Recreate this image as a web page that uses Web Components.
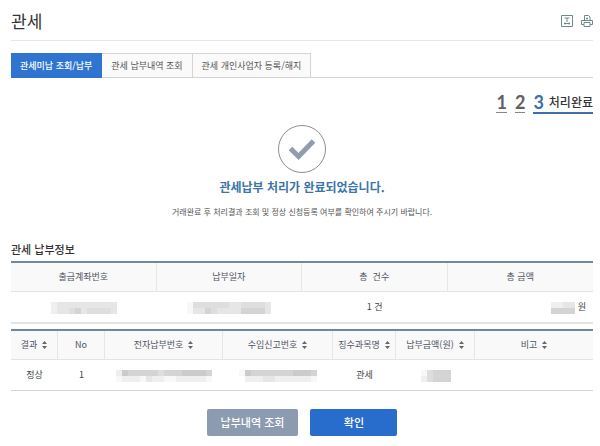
<!DOCTYPE html>
<html lang="ko">
<head>
<meta charset="utf-8">
<meta name="viewport" content="width=device-width, initial-scale=1">
<title>관세</title>
<style>
  body {
    margin: 0;
    padding: 0 7px 8px 11px;
    background: #fff;
    color: #444;
    font-family: "Noto Sans CJK KR", "Noto Sans", sans-serif;
    font-size: 9px;
  }
</style>
</head>
<body>
<page-header>관세</page-header>
<tab-bar>
  <tab-item active>관세미납 조회/납부</tab-item>
  <tab-item>관세 납부내역 조회</tab-item>
  <tab-item>관세 개인사업자 등록/해지</tab-item>
</tab-bar>
<step-list></step-list>
<result-message>
  <span slot="title">관세납부 처리가 완료되었습니다.</span>
  거래완료 후 처리결과 조회 및 정상 신청등록 여부를 확인하여 주시기 바랍니다.
</result-message>
<payment-summary>관세 납부정보</payment-summary>
<payment-list></payment-list>
<button-group>
  <action-button>납부내역 조회</action-button>
  <action-button primary>확인</action-button>
</button-group>

<script>
const tableStyle = `
  :host { display: block; }
  table {
    width: 100%;
    border-collapse: separate;
    border-spacing: 0;
    table-layout: fixed;
    border-top: 2px solid #70899a;
    font-size: 9px;
    line-height: 14px;
  }
  th {
    height: 28px;
    padding: 0;
    font-weight: 400;
    color: #505464;
    background: #f9f9f9;
    border-bottom: 1px solid #e3e3e3;
    border-right: 1px solid #e6e6e6;
    white-space: nowrap;
  }
  th:last-child { border-right: 0; }
  td {
    height: 30px;
    padding: 0;
    text-align: center;
    color: #3f3f3f;
    white-space: nowrap;
  }
`;

class PageHeader extends HTMLElement {
  constructor() {
    super();
    this.attachShadow({mode: 'open'}).innerHTML = `
    <style>
      :host {
        display: flex;
        justify-content: space-between;
        align-items: center;
        height: 41px;
        padding-top: 2px;
        box-sizing: border-box;
        border-bottom: 1px solid #e6e6e6;
      }
      h1 { margin: 0; font-size: 17px; line-height: 24px; font-weight: 400; color: #333; }
      .tools { display: flex; gap: 8px; }
      button { padding: 0; border: 0; background: none; height: 12px; cursor: pointer; }
      svg { display: block; }
    </style>
    <h1><slot></slot></h1>
    <div class="tools">
      <button type="button" aria-label="글자 크기">
        <svg width="12" height="12" viewBox="0 0 12 12" fill="none" stroke="#688c8c">
          <path d="M.5.5h11v11H.5z"/>
          <path d="M3.500 3h5M6 3v4M3 8.500h6M4 7.500v2M8 7.500v2"/>
        </svg>
      </button>
      <button type="button" aria-label="인쇄">
        <svg width="12" height="12" viewBox="0 0 12 12" fill="none" stroke="#688c8c">
          <path d="M3.500 5V.5h4l1.500 1.500v3M3 9.500H.5v-4h11v4H9M3 7.500h6v4H3zM5 3.500h2M6 2.500v2"/>
        </svg>
      </button>
    </div>`;
  }
}

class TabBar extends HTMLElement {
  constructor() {
    super();
    this.attachShadow({mode: 'open'}).innerHTML = `
    <style>
      :host { display: flex; margin-top: 12px; border-bottom: 1px solid #d4d4d4; }
    </style>
    <slot></slot>`;
  }
}

class TabItem extends HTMLElement {
  constructor() {
    super();
    this.attachShadow({mode: 'open'}).innerHTML = `
    <style>
      :host { display: block; margin-bottom: -1px; }
      a {
        display: block;
        padding: 0 9px;
        border: 1px solid #d4d4d4;
        border-left: 0;
        background: #fafafa;
        color: #555;
        font-size: 9px;
        line-height: 23px;
        text-decoration: none;
        white-space: nowrap;
      }
      :host([active]) a {
        background: #2f74d0;
        border-color: #2f74d0;
        color: #fff;
        font-weight: 500;
      }
    </style>
    <a href="#"><slot></slot></a>`;
  }
}

class StepList extends HTMLElement {
  constructor() {
    super();
    this.attachShadow({mode: 'open'}).innerHTML = `
    <style>
      :host { display: block; margin-top: 14px; }
      ol { display: flex; justify-content: flex-end; gap: 8px; margin: 0; padding: 0; list-style: none; }
      li {
        display: flex;
        align-items: center;
        gap: 5px;
        height: 20px;
        border-bottom: 1px solid #888;
        color: #606060;
        font-family: Lato, sans-serif;
        font-size: 18px;
        font-weight: 700;
        line-height: 20px;
      }
      .on { border-bottom: 2px solid #3d6fae; color: #3d6fae; }
      .on span { color: #333; font: 500 12px/20px "Noto Sans CJK KR", "Noto Sans", sans-serif; }
    </style>
    <ol>
      <li>1</li>
      <li>2</li>
      <li class="on">3<span>처리완료</span></li>
    </ol>`;
  }
}

class ResultMessage extends HTMLElement {
  constructor() {
    super();
    this.attachShadow({mode: 'open'}).innerHTML = `
    <style>
      :host {
        display: flex;
        flex-direction: column;
        align-items: center;
        margin-top: 11px;
        text-align: center;
      }
      h2 { margin: 5px 0 0; font-size: 12px; line-height: 18px; font-weight: 700; color: #3a74a8; }
      p { margin: 10px 0 0; font-size: 8px; line-height: 12px; color: #555; }
    </style>
    <svg width="48" height="48" viewBox="0 0 48 48" fill="none">
      <circle cx="24" cy="24" r="23.500" stroke="#8d8d8d"/>
      <path d="M12.500 23.500l8 8L35.500 16" stroke="#929cac" stroke-width="5"/>
    </svg>
    <h2><slot name="title"></slot></h2>
    <p><slot></slot></p>`;
  }
}

// masked value: each digit in the rows attribute is the grey level of one cell
class MaskedValue extends HTMLElement {
  connectedCallback() {
    const shades = ['#fff', '#f8f8f8', '#efefef', '#e6e6e6', '#dedede', '#d4d4d4', '#cbcbcb'];
    const rows = this.getAttribute('rows').split(' ');
    const size = 6;
    let cells = '';
    rows.forEach((row, y) => {
      [...row].forEach((level, x) => {
        cells += `<rect x="${x * size}" y="${y * size}" width="${size}" height="${size}" fill="${shades[level]}"/>`;
      });
    });
    this.attachShadow({mode: 'open'}).innerHTML = `
    <style>
      :host { display: inline-block; vertical-align: middle; }
      svg { display: block; }
    </style>
    <svg width="${rows[0].length * size}" height="${rows.length * size}" shape-rendering="crispEdges" aria-hidden="true">${cells}</svg>`;
  }
}

class PaymentSummary extends HTMLElement {
  constructor() {
    super();
    this.attachShadow({mode: 'open'}).innerHTML = `
    <style>
      ${tableStyle}
      :host { margin-top: 23px; }
      h3 { margin: 0 0 4px; font-size: 11px; line-height: 16px; font-weight: 500; color: #333; }
      table { border-bottom: 2px solid #e6e3e3; }
      td.amount { text-align: right; padding-right: 7px; }
    </style>
    <h3><slot></slot></h3>
    <table>
      <thead>
        <tr><th>출금계좌번호</th><th>납부일자</th><th>총&nbsp; 건수</th><th>총 금액</th></tr>
      </thead>
      <tbody>
        <tr>
          <td><masked-value rows="23333333333 23345344443"></masked-value></td>
          <td><masked-value rows="14444443344443 13354333355553"></masked-value></td>
          <td>1 건</td>
          <td class="amount"><masked-value rows="2233 5555"></masked-value> 원</td>
        </tr>
      </tbody>
    </table>`;
  }
}

class SortButton extends HTMLElement {
  constructor() {
    super();
    this.attachShadow({mode: 'open'}).innerHTML = `
    <style>
      :host { display: inline-block; }
      button {
        display: flex;
        align-items: center;
        gap: 5px;
        padding: 0;
        border: 0;
        background: none;
        color: inherit;
        font: inherit;
        cursor: pointer;
      }
    </style>
    <button type="button"><slot></slot>
      <svg width="5" height="8" viewBox="0 0 5 8" fill="#666"><path d="M0 3l2.500-3L5 3zM0 5h5L2.500 8z"/></svg>
    </button>`;
  }
}

class PaymentList extends HTMLElement {
  constructor() {
    super();
    this.attachShadow({mode: 'open'}).innerHTML = `
    <style>
      ${tableStyle}
      :host { margin-top: 5px; }
      table { border-bottom: 1px solid #d6d6d6; }
      .narrow { width: 47px; }
      .number { width: 118px; }
      .report { width: 110px; }
      .subject { width: 63px; }
      .amount { width: 79px; }
    </style>
    <table>
      <colgroup>
        <col class="narrow"><col class="narrow"><col class="number"><col class="report">
        <col class="subject"><col class="amount"><col>
      </colgroup>
      <thead>
        <tr>
          <th><sort-button>결과</sort-button></th>
          <th>No</th>
          <th><sort-button>전자납부번호</sort-button></th>
          <th><sort-button>수입신고번호</sort-button></th>
          <th><sort-button>징수과목명</sort-button></th>
          <th><sort-button>납부금액(원)</sort-button></th>
          <th><sort-button>비고</sort-button></th>
        </tr>
      </thead>
      <tbody>
        <tr>
          <td>정상</td>
          <td>1</td>
          <td><masked-value rows="2655555455566665 1222132211222221"></masked-value></td>
          <td><masked-value rows="1655555556665 0222332222221"></masked-value></td>
          <td>관세</td>
          <td><masked-value rows="14555 24555"></masked-value></td>
          <td></td>
        </tr>
      </tbody>
    </table>`;
  }
}

class ButtonGroup extends HTMLElement {
  constructor() {
    super();
    this.attachShadow({mode: 'open'}).innerHTML = `
    <style>
      :host { display: flex; justify-content: center; gap: 12px; margin-top: 18px; }
    </style>
    <slot></slot>`;
  }
}

class ActionButton extends HTMLElement {
  constructor() {
    super();
    this.attachShadow({mode: 'open'}).innerHTML = `
    <style>
      :host { display: block; }
      button {
        min-width: 87px;
        height: 27px;
        padding: 0 14px;
        border: 0;
        border-radius: 2px;
        background: #8c9bb0;
        color: #fff;
        font: 500 11px/27px "Noto Sans CJK KR", "Noto Sans", sans-serif;
        cursor: pointer;
      }
      :host([primary]) button { background: #286dcb; }
    </style>
    <button type="button"><slot></slot></button>`;
  }
}

customElements.define('page-header', PageHeader);
customElements.define('tab-bar', TabBar);
customElements.define('tab-item', TabItem);
customElements.define('step-list', StepList);
customElements.define('result-message', ResultMessage);
customElements.define('masked-value', MaskedValue);
customElements.define('sort-button', SortButton);
customElements.define('payment-summary', PaymentSummary);
customElements.define('payment-list', PaymentList);
customElements.define('action-button', ActionButton);
customElements.define('button-group', ButtonGroup);
</script>
</body>
</html>
